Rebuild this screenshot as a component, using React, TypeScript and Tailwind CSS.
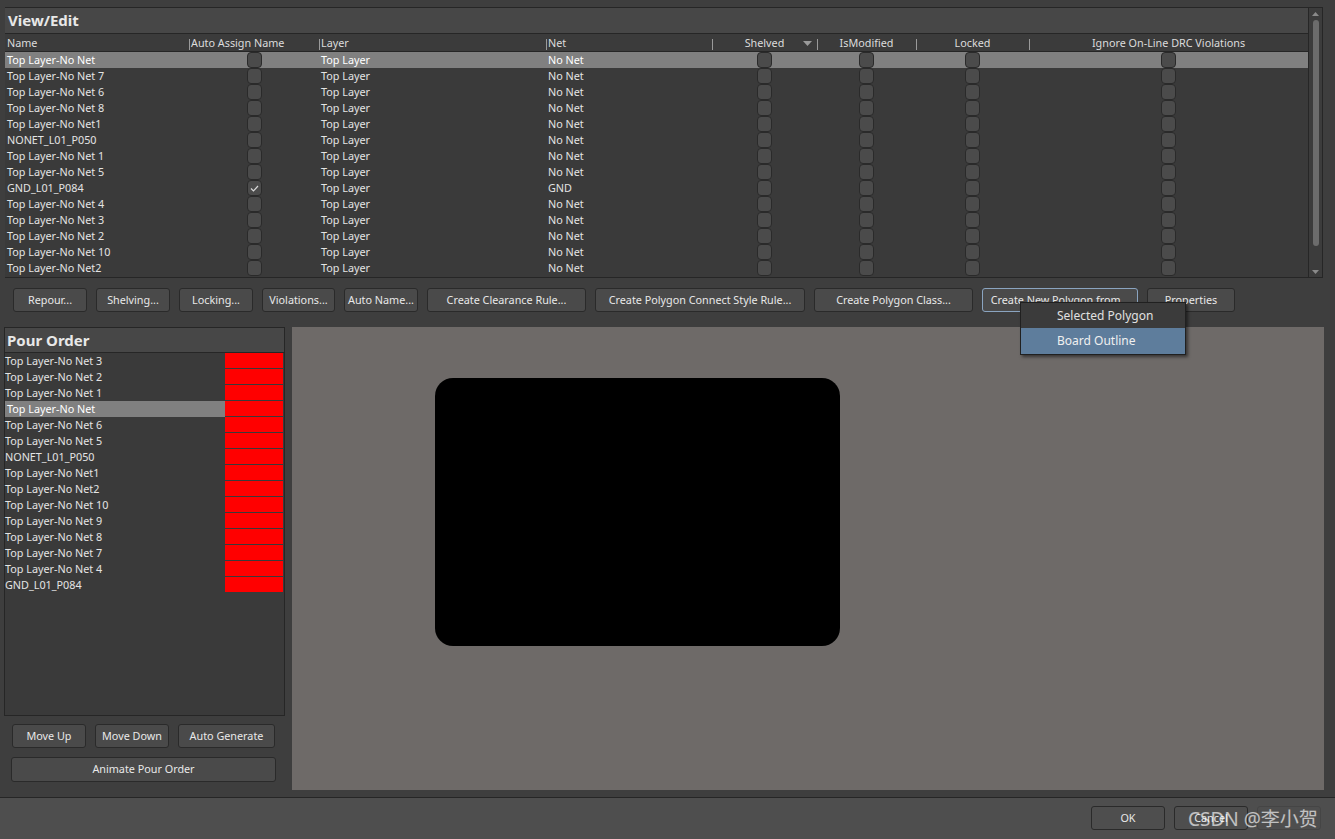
import React from "react"

const rows = [
  { name: "Top Layer-No Net", net: "No Net", auto: false, sel: true },
  { name: "Top Layer-No Net 7", net: "No Net", auto: false },
  { name: "Top Layer-No Net 6", net: "No Net", auto: false },
  { name: "Top Layer-No Net 8", net: "No Net", auto: false },
  { name: "Top Layer-No Net1", net: "No Net", auto: false },
  { name: "NONET_L01_P050", net: "No Net", auto: false },
  { name: "Top Layer-No Net 1", net: "No Net", auto: false },
  { name: "Top Layer-No Net 5", net: "No Net", auto: false },
  { name: "GND_L01_P084", net: "GND", auto: true },
  { name: "Top Layer-No Net 4", net: "No Net", auto: false },
  { name: "Top Layer-No Net 3", net: "No Net", auto: false },
  { name: "Top Layer-No Net 2", net: "No Net", auto: false },
  { name: "Top Layer-No Net 10", net: "No Net", auto: false },
  { name: "Top Layer-No Net2", net: "No Net", auto: false },
]

const pourOrder = [
  "Top Layer-No Net 3",
  "Top Layer-No Net 2",
  "Top Layer-No Net 1",
  "Top Layer-No Net",
  "Top Layer-No Net 6",
  "Top Layer-No Net 5",
  "NONET_L01_P050",
  "Top Layer-No Net1",
  "Top Layer-No Net2",
  "Top Layer-No Net 10",
  "Top Layer-No Net 9",
  "Top Layer-No Net 8",
  "Top Layer-No Net 7",
  "Top Layer-No Net 4",
  "GND_L01_P084",
]

const actions = [
  { label: "Repour...", w: "w-[74px]" },
  { label: "Shelving...", w: "w-[74px]" },
  { label: "Locking...", w: "w-[74px]" },
  { label: "Violations...", w: "w-[73px]" },
  { label: "Auto Name...", w: "w-[74px]" },
  { label: "Create Clearance Rule...", w: "w-[159px]" },
  { label: "Create Polygon Connect Style Rule...", w: "w-[210px]" },
  { label: "Create Polygon Class...", w: "w-[159px]" },
]

const cols = "grid grid-cols-[184px_130px_227px_166px_105px_99px_113px_1fr]"

function Check({ checked }: { checked?: boolean }) {
  return (
    <div className="w-[15px] h-[16px] rounded-[4px] bg-[#4b4b4b] border border-[#2a2a2a] flex items-center justify-center">
      {checked && (
        <svg width="9" height="7" viewBox="0 0 9 7">
          <path d="M1 3.5 L3.5 6 L8 1" stroke="#d8d8d8" strokeWidth="1.2" fill="none" />
        </svg>
      )}
    </div>
  )
}

function Btn({ label, className = "" }: { label: string; className?: string }) {
  return (
    <div
      className={`h-[24px] rounded-[3px] bg-[#4a4a4a] border border-[#2a2a2a] flex items-center justify-center text-[#e8e8e8] whitespace-nowrap ${className}`}
    >
      {label}
    </div>
  )
}

function HeadCell({ label, center, arrow }: { label: string; center?: boolean; arrow?: boolean }) {
  return (
    <div className="relative flex items-center h-full">
      <span className="absolute left-0 top-[4px] h-[11px] w-px bg-[#9a9a9a]" />
      <span className={`${center ? "flex-1 text-center" : "pl-[2px]"}`}>{label}</span>
      {arrow && (
        <svg className="absolute right-[5px] top-[6px]" width="9" height="5" viewBox="0 0 9 5">
          <path d="M0 0 L9 0 L4.5 5 Z" fill="#9a9a9a" />
        </svg>
      )}
    </div>
  )
}

export default function App() {
  return (
    <div className="w-[1335px] h-[839px] bg-[#3e3e3e] flex flex-col font-['Noto_Sans',sans-serif] text-[10.8px] text-[#e4e4e4] overflow-hidden relative">
      {/* View/Edit */}
      <div className="pt-[7px] pl-[5px] pr-[12px]">
        <div className="flex h-[271px] border border-[#262626] border-l-0">
          <div className="flex-1 flex flex-col">
            <div className="h-[26px] bg-[#474747] border-b border-[#262626] flex items-center pl-[3px] text-[15px] font-bold text-[#e8e8e8]">
              View/Edit
            </div>
            <div className={`${cols} h-[18px] pt-[1px] bg-[#3b3b3b] border-b border-[#262626] text-[#dcdcdc]`}>
              <div className="flex items-center pl-[2px]">Name</div>
              <HeadCell label="Auto Assign Name" />
              <HeadCell label="Layer" />
              <HeadCell label="Net" />
              <HeadCell label="Shelved" center arrow />
              <HeadCell label="IsModified" center />
              <HeadCell label="Locked" center />
              <HeadCell label="Ignore On-Line DRC Violations" center />
            </div>
            <div className="flex-1 bg-[#3a3a3a]">
              {rows.map((r) => (
                <div
                  key={r.name}
                  className={`${cols} h-[16px] leading-[16px] ${r.sel ? "bg-[#808080] text-white" : ""}`}
                >
                  <div className="pl-[2px] whitespace-nowrap">{r.name}</div>
                  <div className="flex justify-center"><Check checked={r.auto} /></div>
                  <div className="pl-[2px]">Top Layer</div>
                  <div className="pl-[2px]">{r.net}</div>
                  <div className="flex justify-center"><Check /></div>
                  <div className="flex justify-center"><Check /></div>
                  <div className="flex justify-center"><Check /></div>
                  <div className="flex justify-center"><Check /></div>
                </div>
              ))}
            </div>
          </div>
          {/* scrollbar */}
          <div className="w-[14px] bg-[#3c3c3c] border-l border-[#262626] flex flex-col items-center pt-[4px] pb-[3px]">
            <svg width="7" height="4" viewBox="0 0 7 4"><path d="M0 4 L7 4 L3.5 0 Z" fill="#8a8a8a" /></svg>
            <div className="mt-[4px] w-[6px] h-[226px] rounded-[3px] bg-[#6c6c6c]" />
            <div className="flex-1" />
            <svg width="7" height="4" viewBox="0 0 7 4"><path d="M0 0 L7 0 L3.5 4 Z" fill="#8a8a8a" /></svg>
          </div>
        </div>
      </div>

      {/* action buttons */}
      <div className="mt-[10px] pl-[13px] flex gap-[9px]">
        {actions.map((a) => (
          <Btn key={a.label} label={a.label} className={a.w} />
        ))}
        <div className="relative">
          <Btn label="Create New Polygon from..." className="w-[156px] border-[#8aa4c0]" />
          <div className="absolute left-[38px] top-[14px] w-[166px] bg-[#3b3b3b] border border-[#202020] shadow-[2px_2px_3px_rgba(0,0,0,0.5)] text-[12px] z-10">
            <div className="h-[25px] flex items-center pl-[36px] text-[#e0e0e0]">Selected Polygon</div>
            <div className="h-[26px] flex items-center pl-[36px] bg-[#5e7d9c] text-[#f0f0f0]">Board Outline</div>
          </div>
        </div>
        <Btn label="Properties" className="w-[88px]" />
      </div>

      {/* lower section */}
      <div className="mt-[15px] flex">
        <div className="pl-[4px] w-[285px] flex flex-col">
          <div className="h-[389px] border border-[#262626] bg-[#3a3a3a] flex flex-col">
            <div className="h-[25px] bg-[#474747] border-b border-[#262626] flex items-center pl-[2px] text-[15px] font-bold text-[#e8e8e8]">
              Pour Order
            </div>
            {pourOrder.map((n) => (
              <div key={n} className="flex h-[16px] leading-[16px]">
                <div className={`w-[220px] whitespace-nowrap ${n === "Top Layer-No Net" ? "bg-[#808080] text-white pl-[2px]" : ""}`}>
                  {n}
                </div>
                <div className="w-[58px] h-[15px] bg-[#ff0000]" />
              </div>
            ))}
          </div>
          <div className="mt-[8px] pl-[8px] flex gap-[9px]">
            <Btn label="Move Up" className="w-[74px]" />
            <Btn label="Move Down" className="w-[74px]" />
            <Btn label="Auto Generate" className="w-[97px]" />
          </div>
          <Btn label="Animate Pour Order" className="mt-[9px] ml-[7px] w-[265px] h-[25px]" />
        </div>
        <div className="ml-[7px] w-[1032px] h-[463px] bg-[#6e6a68] pl-[143px] pt-[51px]">
          <div className="w-[405px] h-[268px] bg-black rounded-[18px]" />
        </div>
      </div>

      {/* bottom bar */}
      <div className="mt-[7px] flex-1 bg-[#4e4e4e] border-t border-[#262626] flex justify-end items-start pt-[8px] pr-[14px] gap-[9px]">
        <Btn label="OK" className="w-[74px] bg-[#4e4e4e]" />
        <Btn label="Cancel" className="w-[74px] bg-[#4e4e4e]" />
        <div className="w-[64px] h-[24px] rounded-[3px] border border-[#454545]" />
      </div>
      <div className="absolute left-[1188px] top-[805px] text-[19px] text-white/65 font-['Noto_Sans','Noto_Sans_CJK_SC',sans-serif] whitespace-nowrap">
        CSDN @李小贺
      </div>
    </div>
  )
}
